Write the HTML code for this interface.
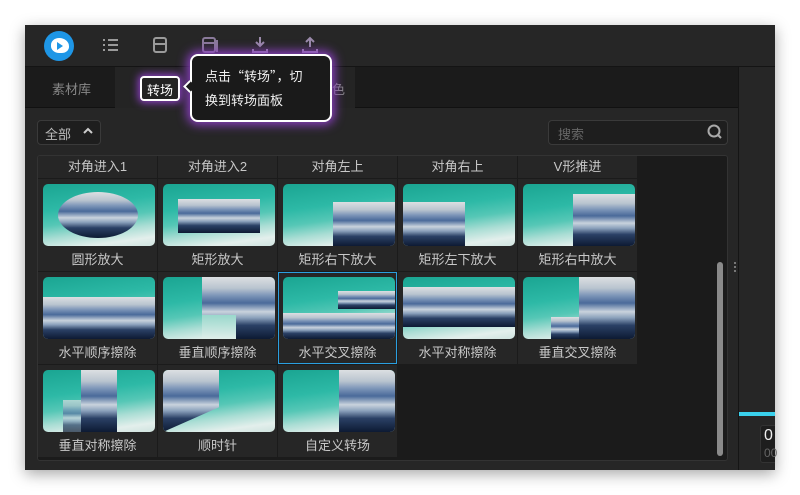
<!DOCTYPE html>
<html><head><meta charset="utf-8"><style>
*{margin:0;padding:0;box-sizing:border-box}
body{width:800px;height:495px;background:#fff;position:relative;overflow:hidden;font-family:"Liberation Sans","Noto Sans CJK SC",sans-serif}
.a{position:absolute}
#win{left:25px;top:25px;width:750px;height:445px;background:#262626;box-shadow:0 4px 14px rgba(0,0,0,.35)}
.t{color:#c8c8c8;font-size:13px;text-align:center}
.cell{position:absolute;width:119px;height:92px;background:#262626}
.th{position:absolute;left:5px;top:5px;width:112px;height:62px;border-radius:5px;overflow:hidden;
background:linear-gradient(172deg,#1aa592 0%,#2db9a6 35%,#56c7b6 55%,#a9ddd4 72%,#e3efec 88%,#cfe3df 100%)}
.ov{position:absolute;background:linear-gradient(180deg,#dcdfe2 0%,#b9c4cf 18%,#7c95b8 30%,#4a6a9a 42%,#c9d3dd 56%,#8aa0bb 66%,#2a4065 78%,#0d1a33 100%)}
.lb{position:absolute;left:0;top:70px;width:119px;text-align:center;color:#c8c8c8;font-size:13px}
.hd{position:absolute;top:0;height:22px;width:119px;background:#262626;color:#c8c8c8;font-size:13px;text-align:center;line-height:22px}
</style></head><body>
<div id="win" class="a">
 <div class="a" style="left:0;top:0;width:750px;height:42px;background:#262626;border-bottom:1px solid #141414"></div>
 <div class="a" style="left:19px;top:6px;width:30px;height:30px;border-radius:50%;background:#1e96e6"></div>
 <div class="a" style="left:26px;top:13px;width:18px;height:15px;border-radius:50% 60% 45% 50%;background:#fff"></div>
 <div class="a" style="left:32px;top:17px;width:0;height:0;border-left:6px solid #1e96e6;border-top:4px solid transparent;border-bottom:4px solid transparent"></div>
 <svg class="a" style="left:0;top:0" width="320" height="42" fill="none" stroke-width="2">
  <g stroke="#9a9a9a"><path d="M78 15h2M83 15h10M78 20h2M83 20h10M78 25h2M83 25h10"/>
  <rect x="129" y="13" width="12" height="14" rx="2"/><path d="M129 19h12"/></g>
  <g stroke="#8a7a9a"><rect x="178" y="13" width="12" height="14" rx="2"/><path d="M178 18h12M192 15v12"/></g>
  <g stroke="#9a8aaa"><path d="M235 12v9M231 17l4 4 4-4M228 24v3h14v-3"/></g>
  <g stroke="#9a8aaa"><path d="M285 22v-9M281 17l4-4 4 4M278 24v3h14v-3"/></g>
 </svg>
 <div class="a" style="left:0;top:42px;width:713px;height:41px;background:#1b1b1b;border-bottom:1px solid #111"></div>
 <div class="a" style="left:90px;top:42px;width:240px;height:41px;background:#242424"></div>
 <div class="a t" style="left:27px;top:54px;color:#888">素材库</div>
 <div class="a t" style="left:307px;top:54px;color:#888">色</div>
 <div class="a" style="left:115px;top:51px;width:40px;height:25px;border:2px solid #fff;border-radius:4px;background:#222;box-shadow:0 0 8px 2px #8a3fc0"></div>
 <div class="a t" style="left:122px;top:55px;color:#fff">转场</div>
 <div class="a" style="left:165px;top:29px;width:142px;height:68px;background:#1a1a1a;border:2px solid #fff;border-radius:8px;box-shadow:0 0 10px 3px #8a3fc0"></div>
 <div class="a" style="left:160px;top:57px;width:9px;height:9px;background:#1a1a1a;border-left:2px solid #fff;border-bottom:2px solid #fff;transform:rotate(45deg)"></div>
 <div class="a" style="left:180px;top:39px;color:#f0f0f0;font-size:13px;line-height:24px;width:125px;font-family:'Noto Sans CJK SC',sans-serif">点击“转场”，切<br>换到转场面板</div>
 <div class="a" style="left:12px;top:95px;width:64px;height:25px;border:1px solid #3a3a3a;border-radius:4px;background:#1e1e1e"></div>
 <div class="a t" style="left:20px;top:99px;color:#bbb">全部</div>
 <svg class="a" style="left:57px;top:102px" width="12" height="8"><path d="M2 6l4-4 4 4" stroke="#ccc" stroke-width="2" fill="none"/></svg>
 <div class="a" style="left:523px;top:95px;width:180px;height:25px;border:1px solid #3a3a3a;border-radius:4px;background:#1e1e1e"></div>
 <div class="a t" style="left:533px;top:99px;color:#666">搜索</div>
 <svg class="a" style="left:682px;top:99px" width="16" height="16"><circle cx="7" cy="7" r="5.5" stroke="#aaa" stroke-width="2" fill="none"/><path d="M11 11l3 3" stroke="#aaa" stroke-width="2"/></svg>
 <div class="a" style="left:12px;top:130px;width:691px;height:306px;background:#1b1b1b;border:1px solid #333;border-radius:3px;overflow:hidden">
  <div class="hd" style="left:0">对角进入1</div>
  <div class="hd" style="left:120px">对角进入2</div>
  <div class="hd" style="left:240px">对角左上</div>
  <div class="hd" style="left:360px">对角右上</div>
  <div class="hd" style="left:480px">V形推进</div>

  <div class="cell" style="left:0;top:23px"><div class="th"><div class="ov" style="left:15px;top:8px;width:80px;height:46px;border-radius:50%"></div></div><div class="lb">圆形放大</div></div>
  <div class="cell" style="left:120px;top:23px"><div class="th"><div class="ov" style="left:15px;top:15px;width:82px;height:34px"></div></div><div class="lb">矩形放大</div></div>
  <div class="cell" style="left:240px;top:23px"><div class="th"><div class="ov" style="left:50px;top:18px;width:62px;height:44px"></div></div><div class="lb">矩形右下放大</div></div>
  <div class="cell" style="left:360px;top:23px"><div class="th"><div class="ov" style="left:0;top:18px;width:62px;height:44px"></div></div><div class="lb">矩形左下放大</div></div>
  <div class="cell" style="left:480px;top:23px"><div class="th"><div class="ov" style="left:50px;top:10px;width:62px;height:52px"></div></div><div class="lb">矩形右中放大</div></div>

  <div class="cell" style="left:0;top:116px"><div class="th"><div class="ov" style="left:0;top:20px;width:112px;height:42px"></div></div><div class="lb">水平顺序擦除</div></div>
  <div class="cell" style="left:120px;top:116px"><div class="th"><div class="ov" style="left:39px;top:0;width:73px;height:62px"></div><div class="a" style="left:39px;top:38px;width:34px;height:24px;background:linear-gradient(#9ad8cc,#dfeeea)"></div></div><div class="lb">垂直顺序擦除</div></div>
  <div class="cell" style="left:240px;top:116px;outline:1px solid #2a9fe0;outline-offset:-1px"><div class="th"><div class="ov" style="left:0;top:36px;width:112px;height:26px"></div><div class="ov" style="left:55px;top:14px;width:57px;height:18px"></div></div><div class="lb">水平交叉擦除</div></div>
  <div class="cell" style="left:360px;top:116px"><div class="th"><div class="ov" style="left:0;top:10px;width:112px;height:40px"></div></div><div class="lb">水平对称擦除</div></div>
  <div class="cell" style="left:480px;top:116px"><div class="th"><div class="ov" style="left:56px;top:0;width:56px;height:62px"></div><div class="ov" style="left:28px;top:40px;width:28px;height:22px"></div></div><div class="lb">垂直交叉擦除</div></div>

  <div class="cell" style="left:0;top:209px"><div class="th"><div class="ov" style="left:38px;top:0;width:36px;height:62px"></div><div class="ov" style="left:20px;top:30px;width:18px;height:32px;opacity:.7"></div></div><div class="lb">垂直对称擦除</div></div>
  <div class="cell" style="left:120px;top:209px"><div class="th"><div class="ov" style="left:0;top:0;width:56px;height:62px;clip-path:polygon(0 0,100% 0,100% 60%,0 100%)"></div></div><div class="lb">顺时针</div></div>
  <div class="cell" style="left:240px;top:209px"><div class="th"><div class="ov" style="left:56px;top:0;width:56px;height:62px"></div></div><div class="lb">自定义转场</div></div>

  <div class="a" style="left:679px;top:106px;width:6px;height:194px;border-radius:3px;background:#8a8a8a"></div>
 </div>
 <div class="a" style="left:713px;top:42px;width:1px;height:403px;background:#151515"></div>
 <div class="a" style="left:709px;top:237px;width:2px;height:2px;background:#777;box-shadow:0 4px #777,0 8px #777"></div>
 <div class="a" style="left:714px;top:387px;width:36px;height:4px;background:#3ad0ec"></div>
 <div class="a" style="left:735px;top:400px;width:15px;height:38px;background:#1e1e1e;border:1px solid #333;border-right:none;border-radius:3px 0 0 3px"></div>
 <div class="a" style="left:739px;top:402px;color:#eee;font-size:16px">0</div>
 <div class="a" style="left:739px;top:421px;color:#666;font-size:12px">00</div>
</div>
</body></html>
